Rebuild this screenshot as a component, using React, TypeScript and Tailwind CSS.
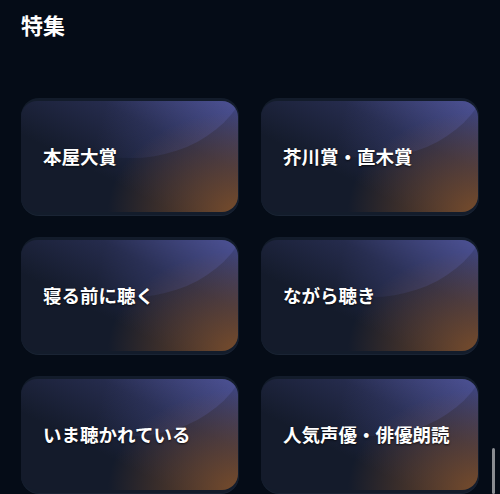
import React from "react";

const features = [
  "本屋大賞",
  "芥川賞・直木賞",
  "寝る前に聴く",
  "ながら聴き",
  "いま聴かれている",
  "人気声優・俳優朗読",
];

function FeatureCard({ title }: { title: string }) {
  return (
    <div className="rounded-[18px] bg-[#131c2b] pt-[3px] pb-[3px] pr-[1px] shadow-[0_1px_0_#1a2434]">
      <div className="relative h-[111px] overflow-hidden rounded-[16px] bg-[radial-gradient(ellipse_60%_90%_at_100%_100%,rgba(128,80,42,0.9),rgba(128,80,42,0)_100%),linear-gradient(to_top_right,#141b2b_35%,#252b4c_68%,#444985_100%)]">
        {/* curved highlight in the top-right corner */}
        <div className="absolute left-[-10px] top-[-137px] h-[194px] w-[240px] rounded-[50%] bg-[linear-gradient(105deg,rgba(110,115,210,0)_45%,rgba(110,115,210,0.2)_88%)]" />
        <div className="relative flex h-full items-center pl-[22px] text-[18.5px] font-bold text-white [text-shadow:0_1px_2px_rgba(0,0,0,0.7)]">
          {title}
        </div>
      </div>
    </div>
  );
}

export default function App() {
  return (
    <div className="relative min-h-[494px] bg-[#050c17] px-[21px] pt-[6px] font-['Noto_Sans_CJK_JP','Noto_Sans',sans-serif]">
      <h1 className="text-[22px] font-bold leading-[36px] text-white">特集</h1>
      <div className="mt-[56px] grid grid-cols-2 gap-x-[22px] gap-y-[22px]">
        {features.map((f) => (
          <FeatureCard key={f} title={f} />
        ))}
      </div>
      <div className="fixed bottom-0 right-[5px] h-[46px] w-[3px] rounded-full bg-[#8a8d92]" />
    </div>
  );
}
